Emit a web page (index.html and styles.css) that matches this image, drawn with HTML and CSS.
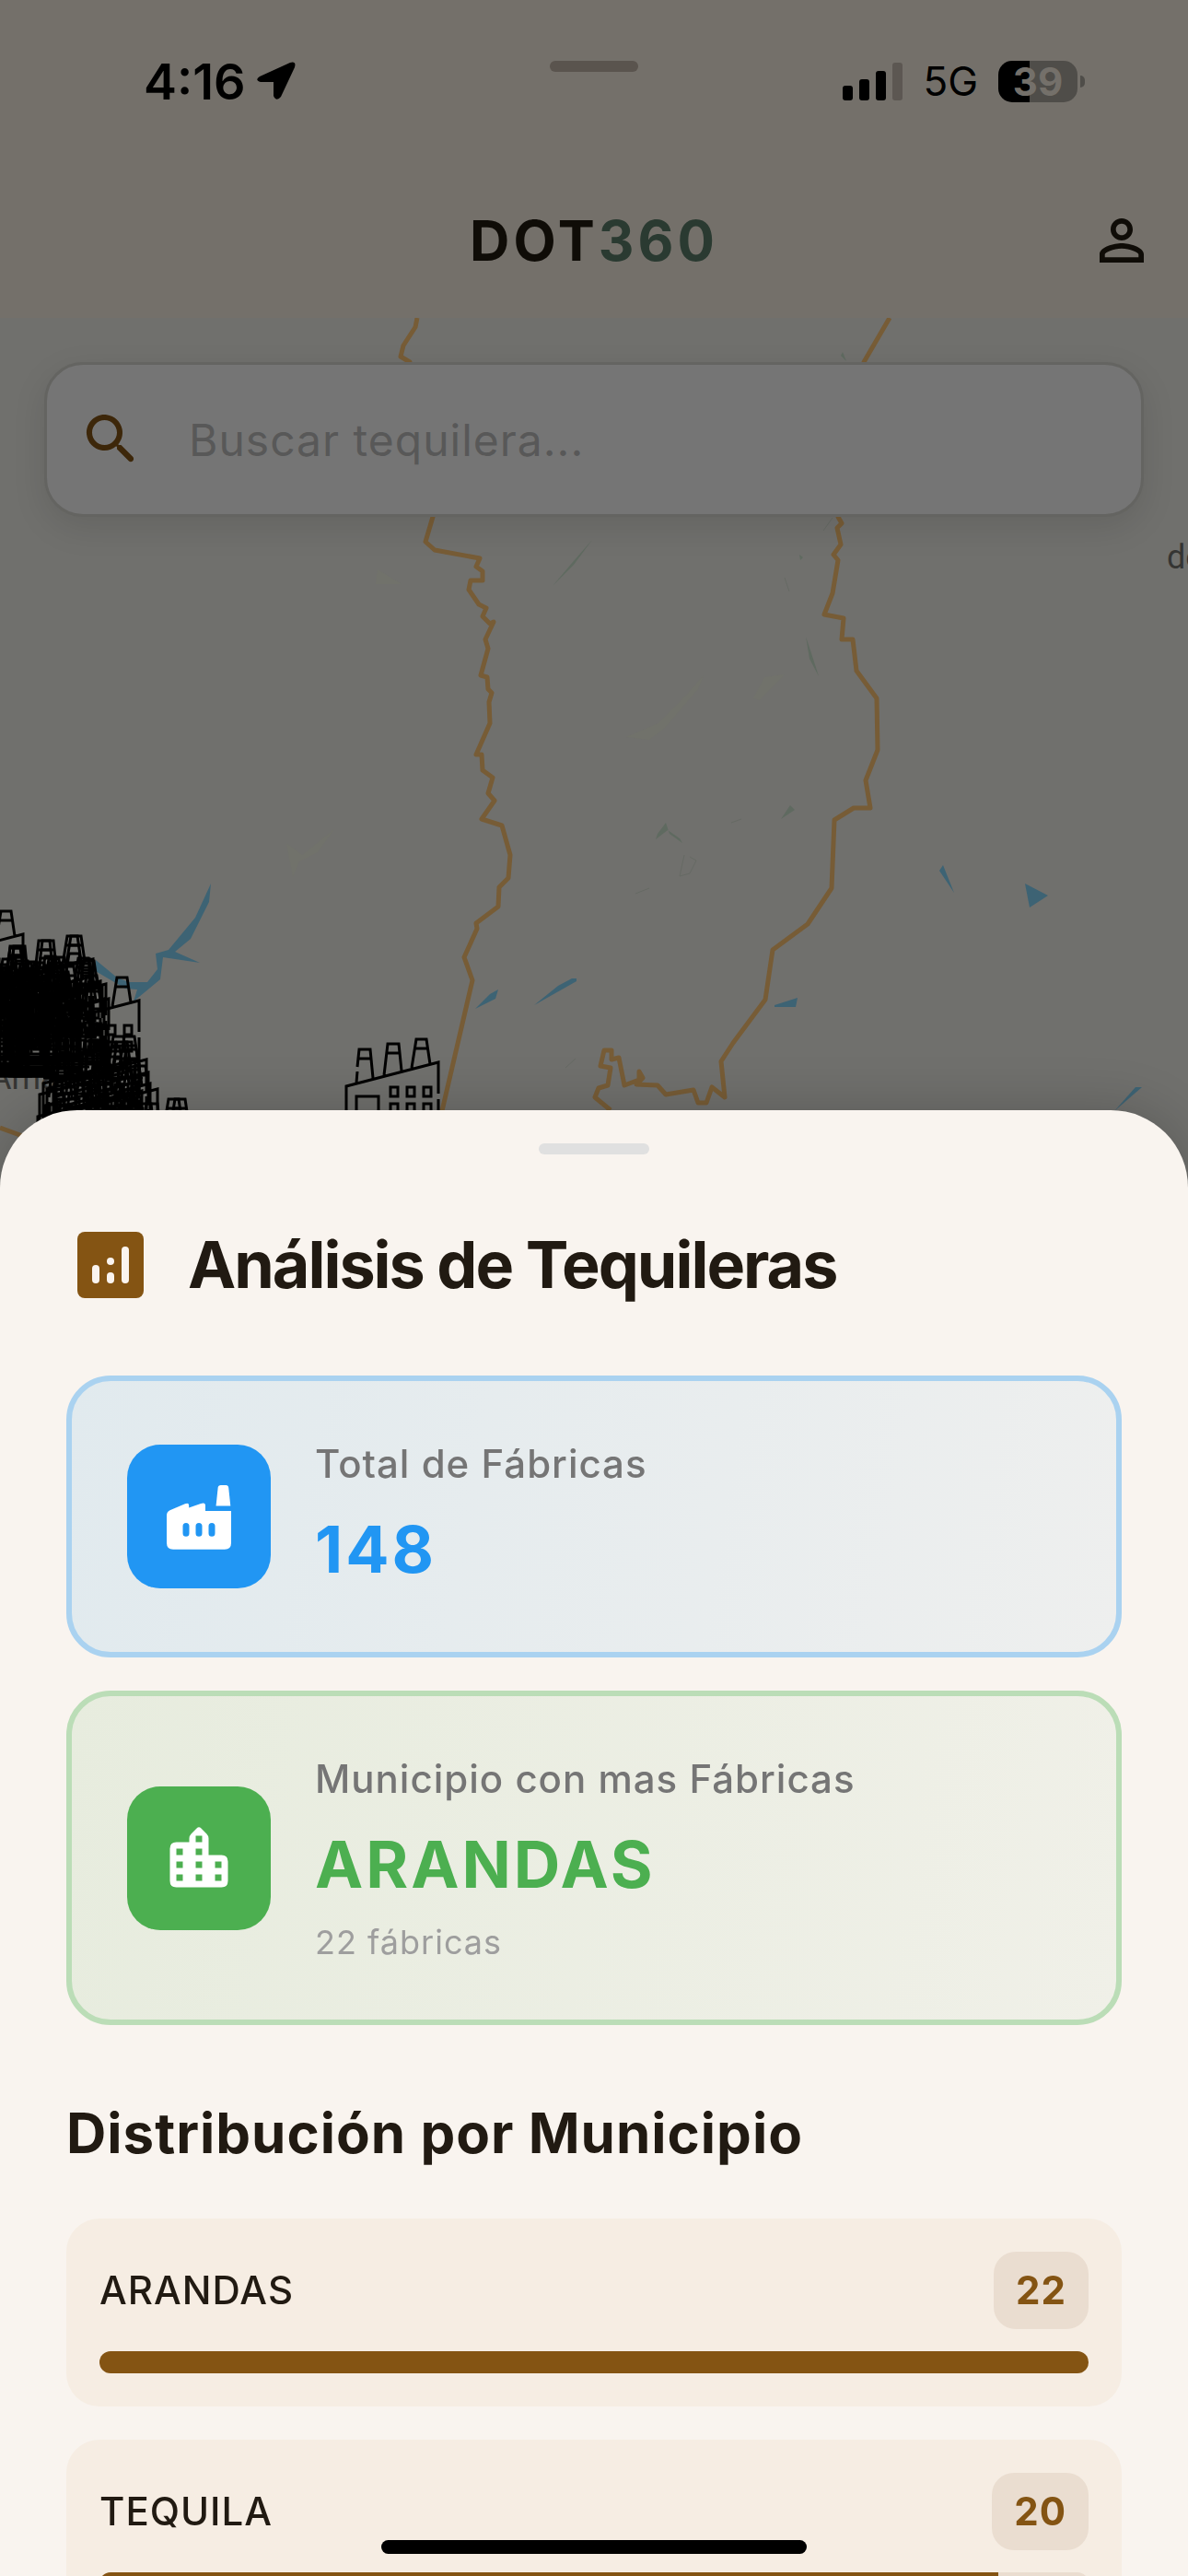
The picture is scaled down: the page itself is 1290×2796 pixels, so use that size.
FILE: index.html
```html
<!DOCTYPE html>
<html lang="es">
<head>
    <meta charset="UTF-8">
    <meta name="viewport" content="width=device-width, initial-scale=1.0">
    <title>DOT360</title>
    <link rel="stylesheet" href="styles.css">
</head>
<body>
    <div class="top">
        <div class="status-bar">
            <div class="status-time">
                <span>4:16</span>
                <svg class="arrow" viewBox="0 0 42 42"><path d="M3 16 L36 1 Q43 -1 41 6 L26 38 Q21 44 18 37 V22 H4 Q-3 20 3 16Z"/></svg>
            </div>
            <div class="top-handle"></div>
            <div class="status-right">
                <svg class="signal" viewBox="0 0 65 41">
                    <rect x="0" y="25" width="11" height="16" rx="3"/>
                    <rect x="18" y="18" width="11" height="23" rx="3"/>
                    <rect x="36" y="9" width="11" height="32" rx="3"/>
                    <rect x="54" y="0" width="11" height="41" rx="3" fill="#5c5752"/>
                </svg>
                <span class="network">5G</span>
                <div class="battery"><span>39</span></div>
            </div>
        </div>
        <header class="app-bar">
            <h1 class="brand">DOT<span>360</span></h1>
            <button class="profile" aria-label="Perfil">
                <svg viewBox="0 0 24 24"><path d="M12 5.9c1.16 0 2.1.94 2.1 2.1s-.94 2.1-2.1 2.1S9.9 9.16 9.9 8s.94-2.1 2.1-2.1m0 9c2.97 0 6.1 1.46 6.1 2.1v1.1H5.9V17c0-.64 3.13-2.1 6.1-2.1M12 4C9.79 4 8 5.79 8 8s1.79 4 4 4 4-1.79 4-4-1.79-4-4-4zm0 9c-2.67 0-8 1.34-8 4v3h16v-3c0-2.66-5.33-4-8-4z"/></svg>
            </button>
        </header>
    </div>

    <main class="map-area">
        <svg class="map" viewBox="0 345 1290 960" preserveAspectRatio="xMidYMin slice">
            <defs>
                <g id="factory">
                    <path d="M1 110V52L101 26V60M101 66V110M-3 110H105M12 48L13 36M13 31L15 12H27L30 43M14 22H28M42 40L46 6H58L61 35M45 16H59M72 32L77 1H88L92 28M76 11H89"/>
                    <path d="M12 110V63H36V110"/>
                    <path d="M49 53h8v10h-8zM67 53h8v10h-8zM85 53h8v10h-8zM49 71h8v10h-8zM67 71h8v10h-8zM85 71h8v10h-8z"/>
                </g>
            </defs>
            <!-- parks -->
            <g fill="#5f6a60">
                <path d="M643 586L623 613L600 636L622 610Z"/>
                <path d="M875 691L881 709L889 734L879 715Z"/>
                <path d="M723 893L727 905L741 915L738 910L725 901L712 911L714 905Z"/>
                <path d="M858 874L863 879L848 889Z"/>
                <path d="M868 602L872 605L869 608Z"/>
                <path d="M915 382L919 392L913 386Z"/>
            </g>
            <g fill="none" stroke="#666a64" stroke-width="1">
                <path d="M743 928L738 951L749 948L756 934L749 930M794 893L805 889M690 970L705 964M904 562L894 576M852 627L857 642M614 1159L625 1149"/>
            </g>
            <g fill="#71726b">
                <path d="M764 733L740 760L715 785L680 800L705 803L722 790L758 748Z"/>
                <path d="M410 618L436 634L408 634Z"/>
                <path d="M363 900L345 925L325 935L318 952L311 915L328 928Z"/>
                <path d="M852 732L830 735L818 758L825 760Z"/>
            </g>
            <!-- water -->
            <g fill="#3d6374">
                <path d="M229 959L227 979L207 1019L190 1033L217 1045L177 1039L174 1063L145 1087L149 1074L136 1073L102 1053L104 1042L127 1061L140 1066H160L171 1052L169 1035L183 1031L212 996Z"/>
                <path d="M516 1095L532 1079L541 1074L538 1084Z"/>
                <path d="M580 1091L606 1070L621 1062H626V1065Z"/>
                <path d="M1024 939L1020 945L1036 969Z"/>
                <path d="M1113 959L1138 972L1118 985Z"/>
                <path d="M841 1091L866 1083L864 1093H841Z"/>
                <path d="M1210 1206L1233 1180H1240Z"/>
            </g>
            <!-- municipal borders -->
            <g fill="none" stroke="#775c36" stroke-width="5" stroke-linejoin="round">
                <path d="M453 345L451 355L438 375L435 387L445 393L480 500L470 561L462 588L472 597L521 606L517 615L524 620V630H511L509 640L520 656L528 660L524 669L532 677L536 675L527 694L530 704L522 733L529 735L530 748L534 752L531 762L532 785L517 819H523L524 836L535 844L530 861L537 869L523 889L545 896L554 928L552 953L542 963L541 984L517 1002L518 1008L504 1039L513 1064L479 1210"/>
                <path d="M966 345L938 393L910 561L914 568L909 573L913 591L905 602L910 608L904 644L895 667L916 671L914 694H926L930 728L952 758L953 814L940 847L945 877H927L906 890L903 964L877 1003L839 1031L831 1085L796 1132L783 1152L787 1191L773 1180L767 1197H758L753 1183L723 1188L714 1178L691 1177L698 1170L694 1163V1172L678 1178L672 1148L664 1150V1140H656L652 1157L663 1159L660 1178L650 1181L646 1191L663 1205"/>
                <path d="M0 1224L30 1235"/>
            </g>
            <g class="map-label">
                <text x="1267" y="617">de</text>
                <text x="-11" y="1182">Ama</text>
            </g>
            <g id="pins" fill="none" stroke="#000" stroke-width="3"></g>
        </svg>
        <form class="search">
            <label for="q" aria-label="Buscar">
                <svg viewBox="0 0 24 24"><path d="M15.5 14h-.79l-.28-.27c1.2-1.4 1.82-3.31 1.48-5.34-.47-2.78-2.79-5-5.59-5.34-4.23-.52-7.79 3.04-7.27 7.27.34 2.8 2.56 5.12 5.34 5.59 2.03.34 3.94-.28 5.34-1.48l.27.28v.79l4.25 4.25c.41.41 1.08.41 1.49 0 .41-.41.41-1.08 0-1.49L15.5 14zm-6 0C7.01 14 5 11.99 5 9.5S7.01 5 9.5 5 14 7.01 14 9.5 11.99 14 9.5 14z"/></svg>
            </label>
            <input id="q" type="text" placeholder="Buscar tequilera...">
        </form>
    </main>

    <section class="sheet">
        <div class="sheet-handle"></div>
        <div class="sheet-title">
            <svg viewBox="0 0 24 24">
                <rect x="3" y="3" width="18" height="18" rx="2" fill="#845413"/>
                <g fill="#faf4ef">
                    <rect x="7" y="12" width="2" height="5" rx="1"/>
                    <rect x="11" y="10" width="2" height="2" rx="1"/>
                    <rect x="11" y="14" width="2" height="3" rx="1"/>
                    <rect x="15" y="7" width="2" height="10" rx="1"/>
                </g>
            </svg>
            <h2>Análisis de Tequileras</h2>
        </div>

        <div class="stats">
            <div class="stat blue">
                <div class="stat-icon">
                    <svg viewBox="0 0 24 24" fill="#fff">
                        <path fill-rule="evenodd" d="M2 11.7Q2 10.6 3 10.1L7.7 8.1Q8.9 7.6 8.9 8.6V9.3L12.6 8Q14 7.5 14 8.6V10.3H22V20.2Q22 22.2 20 22.2H4Q2 22.2 2 20.2ZM8 14Q7 14 7 15V17.2Q7 18.2 8 18.2T9 17.2V15Q9 14 8 14ZM12 14Q11 14 11 15V17.2Q11 18.2 12 18.2T13 17.2V15Q13 14 12 14ZM16 14Q15 14 15 15V17.2Q15 18.2 16 18.2T17 17.2V15Q17 14 16 14Z"/>
                        <path d="M17.3 8.7L17.9 3.1Q18 2.3 18.8 2.3H20.4Q21.1 2.3 21.2 3.1L21.8 8.7Z"/>
                    </svg>
                </div>
                <div class="stat-text">
                    <p class="label">Total de Fábricas</p>
                    <p class="value">148</p>
                </div>
            </div>
            <div class="stat green">
                <div class="stat-icon">
                    <svg viewBox="0 0 24 24" fill="#fff">
                        <path fill-rule="evenodd" d="M15 11V5.8Q15 5 14.4 4.4L12.7 2.7Q12 2 11.3 2.7L9.6 4.4Q9 5 9 5.8V7H5Q3 7 3 9V19Q3 21 5 21H19Q21 21 21 19V13Q21 11 19 11ZM7 19H5V17H7ZM7 15H5V13H7ZM7 11H5V9H7ZM13 19H11V17H13ZM13 15H11V13H13ZM13 11H11V9H13ZM13 7H11V5H13ZM19 19H17V17H19ZM19 15H17V13H19Z"/>
                    </svg>
                </div>
                <div class="stat-text">
                    <p class="label">Municipio con mas Fábricas</p>
                    <p class="value">ARANDAS</p>
                    <p class="sub">22 fábricas</p>
                </div>
            </div>
        </div>

        <h3>Distribución por Municipio</h3>
        <ul class="list">
            <li class="row">
                <div class="row-head"><span>ARANDAS</span><span class="badge">22</span></div>
                <div class="bar"><div class="fill" style="width: 100%"></div></div>
            </li>
            <li class="row">
                <div class="row-head"><span>TEQUILA</span><span class="badge">20</span></div>
                <div class="bar"><div class="fill" style="width: 90.9%"></div></div>
            </li>
        </ul>
    </section>
    <div class="home-indicator"></div>

    <script>
        // top left corner of every factory pin on the map
        let pins = [
            [375, 1127], [-76, 988], [-4, 1015], [0, 1015], [50, 1060], [106, 1192], [113, 1192],
            [-66, 1028], [-62, 1028], [-28, 1037], [-24, 1040], [14, 1042], [10, 1045],
            [-40, 1044], [-36, 1050], [-52, 1052], [-14, 1054], [-8, 1048],
            [-70, 1058], [-80, 1046], [-30, 1058], [-2, 1034], [-18, 1038], [8, 1039],
            [17, 1058], [-21, 1048], [-43, 1056], [12, 1058], [-74, 1040],
            [46, 1124], [50, 1130], [58, 1124], [42, 1136], [70, 1156],
            [62, 1150], [48, 1148], [40, 1160], [60, 1138], [53, 1158]
        ];
        let svgNS = "http://www.w3.org/2000/svg";
        pins.forEach(([x, y]) => {
            let use = document.createElementNS(svgNS, "use");
            use.setAttribute("href", "#factory");
            use.setAttribute("x", x);
            use.setAttribute("y", y);
            document.getElementById("pins").appendChild(use);
        });
    </script>
</body>
</html>
```

FILE: styles.css
```css
* {
    box-sizing: border-box;
}
body {
    display: flex;
    flex-direction: column;
    height: 100vh;
    margin: 0;
    overflow: hidden;
    background: #70706d;
    color: #211a12;
    font-family: Inter, "Liberation Sans", sans-serif;
}
h1, h2, h3, p, ul {
    margin: 0;
    padding: 0;
}
svg {
    display: block;
}

/* status bar + app bar */
.top {
    background: #74706a;
}
.status-bar {
    display: grid;
    grid-template-columns: 1fr auto 1fr;
    height: 177px;
    padding: 56px 120px 0;
    color: #000;
}
.status-time {
    display: flex;
    align-items: center;
    gap: 12px;
    height: 64px;
    padding-left: 36px;
    font-size: 54px;
    font-weight: 600;
}
.arrow {
    width: 42px;
    height: 42px;
}
.top-handle {
    width: 96px;
    height: 12px;
    margin-top: 10px;
    border-radius: 6px;
    background: #5a544e;
}
.status-right {
    display: flex;
    align-items: center;
    justify-content: flex-end;
    gap: 22px;
    height: 64px;
}
.signal {
    width: 65px;
    height: 41px;
}
.network {
    font-size: 44px;
}
.battery {
    position: relative;
    width: 86px;
    height: 45px;
    border-radius: 15px;
    background: linear-gradient(90deg, #000 39%, #4f4d49 39%);
    color: #74706a;
    font-size: 42px;
    font-weight: 700;
    line-height: 45px;
    text-align: center;
}
.battery::after {
    content: "";
    position: absolute;
    right: -8px;
    top: 16px;
    width: 5px;
    height: 13px;
    border-radius: 0 5px 5px 0;
    background: #4f4d49;
}
.app-bar {
    display: grid;
    grid-template-columns: 72px 1fr 72px;
    align-items: center;
    height: 168px;
    padding: 0 36px;
}
.brand {
    grid-column: 2;
    color: #0f0c07;
    font-size: 60px;
    font-weight: 700;
    letter-spacing: 4px;
    text-align: center;
}
.brand span {
    color: #2a3a31;
}
.profile {
    padding: 0;
    border: 0;
    background: none;
}
.profile svg {
    width: 72px;
    height: 72px;
    fill: #0f0c07;
}

/* map */
.map-area {
    position: relative;
    flex: 1;
    padding: 48px;
}
.map {
    position: absolute;
    left: 0;
    top: 0;
    width: 100%;
    height: 960px;
}
.map-label {
    fill: #353533;
    font-family: Roboto, sans-serif;
    font-size: 36px;
}
.search {
    position: relative;
    display: flex;
    align-items: center;
    gap: 48px;
    height: 168px;
    padding: 0 34px;
    border: 3px solid #646461;
    border-radius: 42px;
    background: #757575;
    box-shadow: 0 12px 36px rgba(0, 0, 0, .1);
}
.search svg {
    width: 72px;
    height: 72px;
    fill: #3d270a;
}
.search input {
    flex: 1;
    min-width: 0;
    padding: 0;
    border: 0;
    outline: none;
    background: none;
    font-family: inherit;
    font-size: 48px;
    letter-spacing: 1px;
}
.search input::placeholder {
    color: #585858;
    opacity: 1;
}

/* bottom sheet */
.sheet {
    position: fixed;
    top: 1205px;
    right: 0;
    bottom: 0;
    left: 0;
    overflow: hidden;
    padding: 36px 72px 0;
    border-radius: 84px 84px 0 0;
    background: #f9f4ef;
    box-shadow: 0 0 60px rgba(0, 0, 0, .2);
}
.sheet-handle {
    width: 120px;
    height: 12px;
    margin: 0 auto 72px;
    border-radius: 6px;
    background: #e0e0e0;
}
.sheet-title {
    display: flex;
    align-items: center;
    gap: 36px;
    margin-bottom: 72px;
}
.sheet-title svg {
    width: 96px;
    height: 96px;
}
.sheet-title h2 {
    font-size: 70px;
    font-weight: 700;
    letter-spacing: -2px;
    line-height: 96px;
}
.stats {
    display: flex;
    flex-direction: column;
    gap: 36px;
}
.stat {
    display: flex;
    align-items: center;
    gap: 48px;
    padding: 60px;
    border: 6px solid;
    border-radius: 48px;
}
.stat.blue {
    border-color: #aad2f0;
    background: linear-gradient(100deg, #e1eaee, #eeefee) border-box;
}
.stat.green {
    border-color: #bbddb7;
    background: linear-gradient(100deg, #e7ecde, #f0f0e8) border-box;
}
.stat-icon {
    padding: 36px;
    border-radius: 36px;
}
.stat-icon svg {
    width: 84px;
    height: 84px;
}
.blue .stat-icon {
    background: #2196f3;
}
.green .stat-icon {
    background: #4caf50;
}
.label {
    color: #757575;
    font-size: 42px;
    font-weight: 500;
    letter-spacing: 1px;
    line-height: 60px;
}
.value {
    margin-top: 12px;
    font-size: 70px;
    font-weight: 700;
    letter-spacing: 3px;
    line-height: 102px;
}
.blue .value {
    color: #2196f3;
}
.green .value {
    color: #4caf50;
}
.sub {
    margin-top: 9px;
    color: #9e9e9e;
    font-size: 36px;
    letter-spacing: 1px;
    line-height: 48px;
}
h3 {
    margin: 72px 0 48px;
    font-size: 60px;
    font-weight: 700;
    letter-spacing: 1px;
    line-height: 90px;
}
.list {
    display: flex;
    flex-direction: column;
    gap: 36px;
    list-style: none;
}
.row {
    padding: 36px;
    border-radius: 36px;
    background: #f6ede3;
}
.row-head {
    display: flex;
    align-items: center;
    justify-content: space-between;
    margin-bottom: 24px;
    font-size: 42px;
    font-weight: 500;
    letter-spacing: 1px;
    line-height: 60px;
}
.badge {
    padding: 12px 24px;
    border-radius: 24px;
    background: #eaddd0;
    color: #845413;
    font-weight: 700;
}
.bar {
    overflow: hidden;
    height: 24px;
    border-radius: 12px;
    background: #eaddd0;
}
.fill {
    height: 100%;
    background: #845413;
}
.home-indicator {
    position: fixed;
    bottom: 24px;
    left: 50%;
    width: 462px;
    height: 15px;
    border-radius: 8px;
    background: #000;
    transform: translateX(-50%);
}
```
